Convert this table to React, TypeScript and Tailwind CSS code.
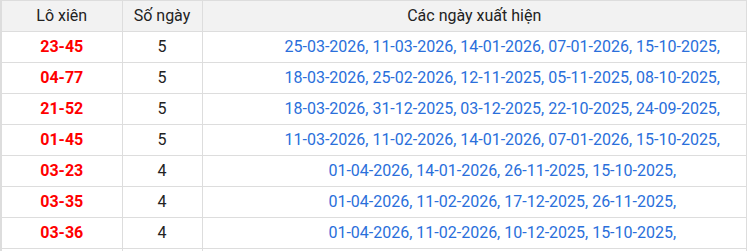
const rows: { pair: string; count: number; dates: string[] }[] = [
  { pair: '23-45', count: 5, dates: ['25-03-2026', '11-03-2026', '14-01-2026', '07-01-2026', '15-10-2025'] },
  { pair: '04-77', count: 5, dates: ['18-03-2026', '25-02-2026', '12-11-2025', '05-11-2025', '08-10-2025'] },
  { pair: '21-52', count: 5, dates: ['18-03-2026', '31-12-2025', '03-12-2025', '22-10-2025', '24-09-2025'] },
  { pair: '01-45', count: 5, dates: ['11-03-2026', '11-02-2026', '14-01-2026', '07-01-2026', '15-10-2025'] },
  { pair: '03-23', count: 4, dates: ['01-04-2026', '14-01-2026', '26-11-2025', '15-10-2025'] },
  { pair: '03-35', count: 4, dates: ['01-04-2026', '11-02-2026', '17-12-2025', '26-11-2025'] },
  { pair: '03-36', count: 4, dates: ['01-04-2026', '11-02-2026', '10-12-2025', '15-10-2025'] },
];

export default function App() {
  return (
    <div className="bg-white w-[747px] h-[251px] overflow-hidden font-['Roboto',sans-serif] text-[16px]">
      <table className="w-[747px] border-collapse table-fixed border-l-2 border-[#dddddd]">
        <colgroup>
          <col className="w-[121px]" />
          <col className="w-[80px]" />
          <col />
        </colgroup>
        <thead>
          <tr className="bg-[#f2f2f2] h-[31px] text-[#222222]">
            <th className="font-normal border border-[#dddddd] text-center">Lô xiên</th>
            <th className="font-normal border border-[#dddddd] text-center">Số ngày</th>
            <th className="font-normal border border-[#dddddd] text-center">Các ngày xuất hiện</th>
          </tr>
        </thead>
        <tbody>
          {rows.map((r) => (
            <tr key={r.pair} className="h-[31px]">
              <td className="border border-[#dddddd] text-center font-bold text-[#ff0000]">{r.pair}</td>
              <td className="border border-[#dddddd] text-center text-[#222222]">{r.count}</td>
              <td className="border border-[#dddddd] text-center pl-[56px] text-[#2a6fdb]">
                {r.dates.map((d) => d + ', ').join('').trimEnd()}
              </td>
            </tr>
          ))}
          {/* next row starts just below the visible area */}
          <tr className="h-[31px]">
            <td className="border border-[#dddddd]" />
            <td className="border border-[#dddddd]" />
            <td className="border border-[#dddddd]" />
          </tr>
        </tbody>
      </table>
    </div>
  );
}
